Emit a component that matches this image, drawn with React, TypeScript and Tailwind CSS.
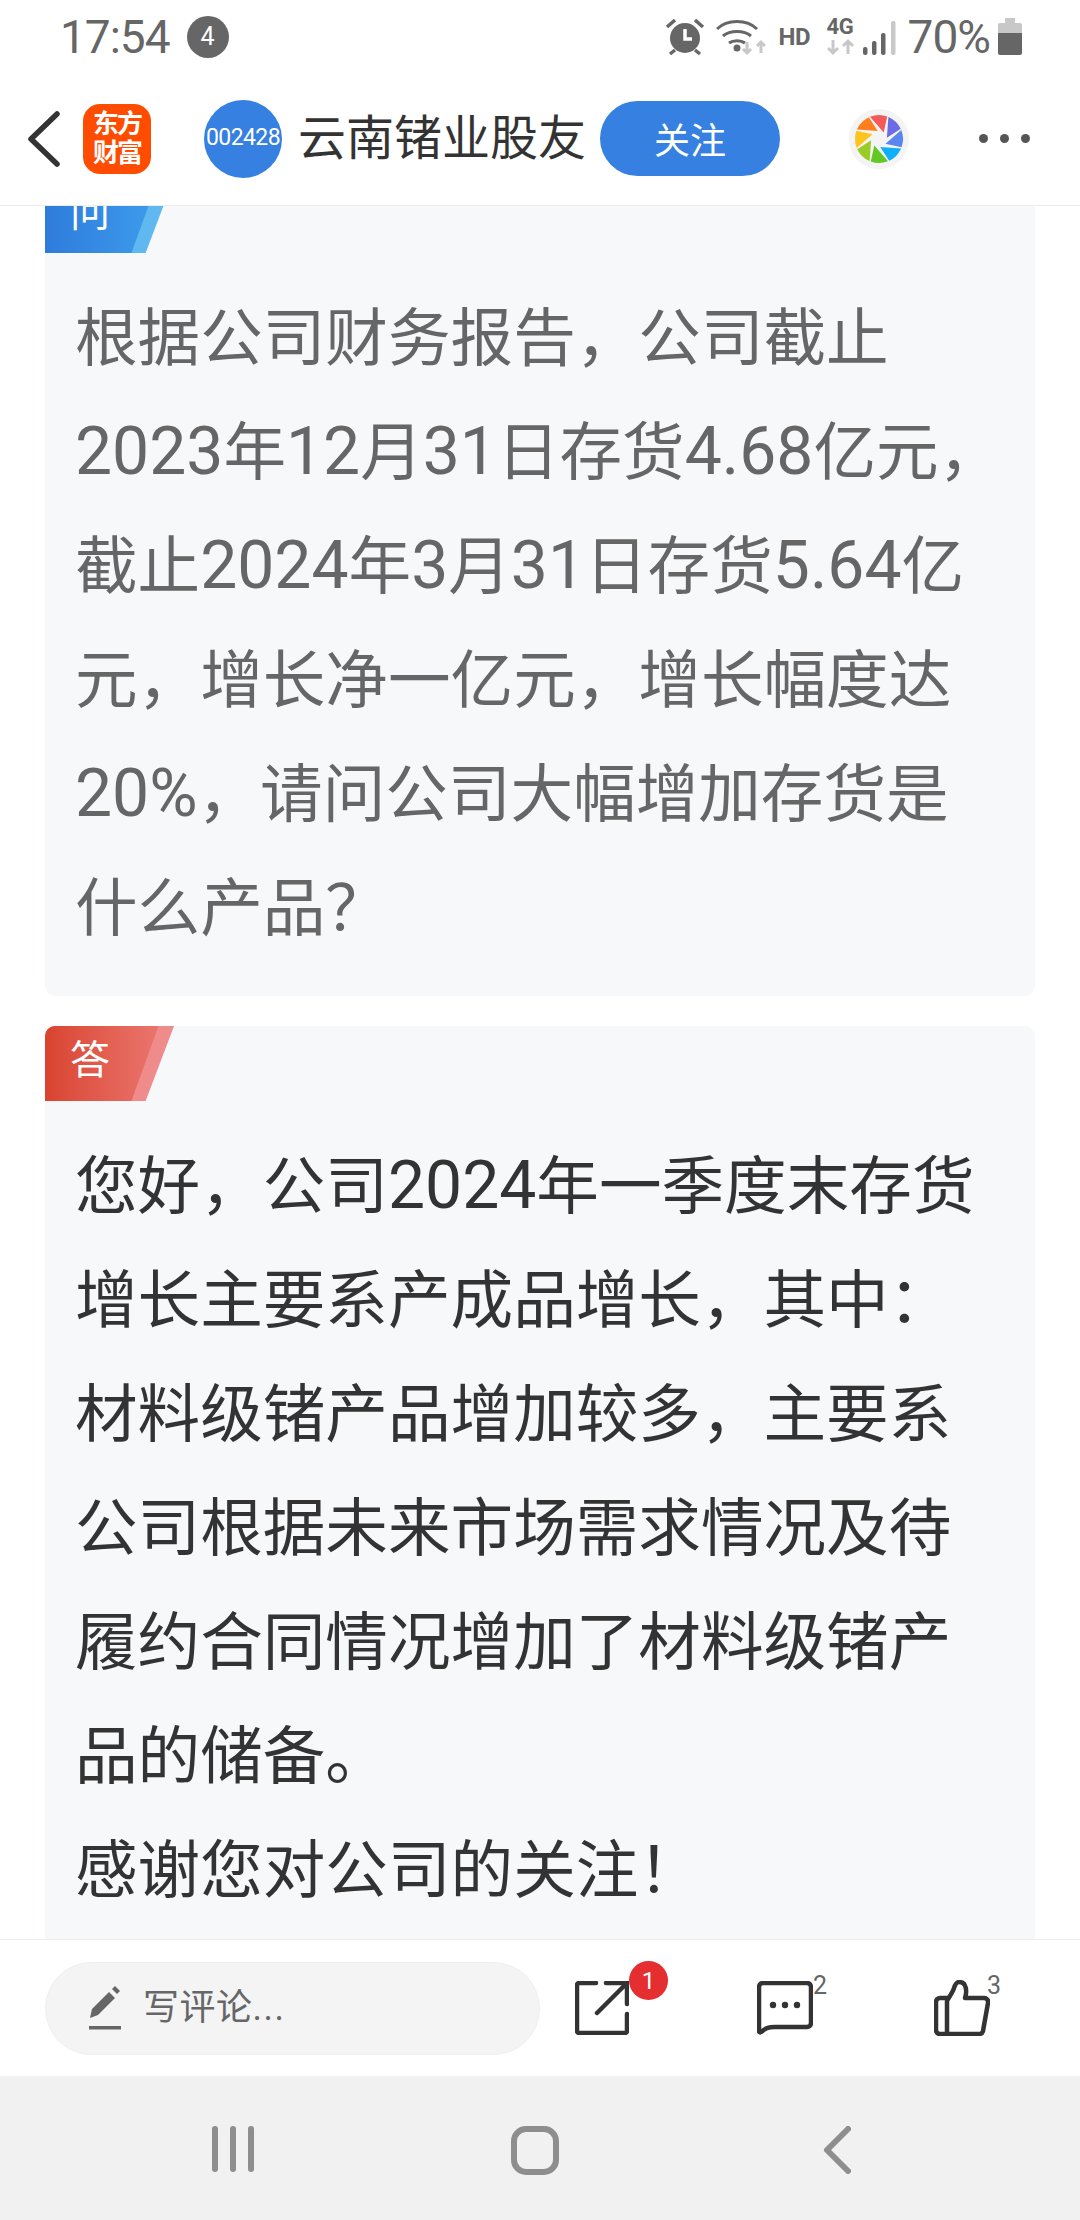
import React from 'react';

const question = [
  '根据公司财务报告，公司截止',
  '2023年12月31日存货4.68亿元，',
  '截止2024年3月31日存货5.64亿',
  '元，增长净一亿元，增长幅度达',
  '20%，请问公司大幅增加存货是',
  '什么产品？',
];

const answer = [
  '您好，公司2024年一季度末存货',
  '增长主要系产成品增长，其中：',
  '材料级锗产品增加较多，主要系',
  '公司根据未来市场需求情况及待',
  '履约合同情况增加了材料级锗产',
  '品的储备。',
  '感谢您对公司的关注！',
];

const blades = ['#f55a5a', '#6b6be8', '#5b86f0', '#0fb0f8', '#62c924', '#9acb27', '#fdc41e', '#ff7f1e'];

function StatusIcons() {
  return (
    <div className="flex items-center">
      {/* alarm */}
      <svg width="40" height="38" viewBox="0 0 40 38" className="mr-[11px]">
        <circle cx="20" cy="20" r="15" fill="#666" />
        <path d="M20 11v10h7" stroke="#fff" strokeWidth="3.5" fill="none" />
        <path d="M2 9l8-7M38 9l-8-7" stroke="#666" strokeWidth="3.5" />
        <path d="M5 36l5-4M35 36l-5-4" stroke="#666" strokeWidth="3.5" />
      </svg>
      {/* wifi */}
      <svg width="50" height="38" viewBox="0 0 50 38" className="mr-[13px]">
        <path d="M1 11C11 1 31 1 41 11M7 18c7-6 21-6 28 0M13 25c4-3 12-3 16 0" stroke="#666" strokeWidth="3" fill="none" />
        <circle cx="21" cy="30" r="3.5" fill="#666" />
        <path d="M31 24v11m-4-4l4 4 4-4M45 35V24m-4 4l4-4 4 4" stroke="#c8c8c8" strokeWidth="3" fill="none" />
      </svg>
      <span className="w-[48px] text-[24px] font-bold text-[#666] leading-none tracking-[-0.5px]">HD</span>
      <div className="relative w-[36px] h-[38px]">
        <span className="absolute left-0 top-[-2px] text-[22px] font-bold text-[#666] leading-none tracking-[-0.5px]">4G</span>
        <svg width="28" height="18" viewBox="0 0 28 18" className="absolute left-0 top-[20px]">
          <path d="M6 2v13m-5-5l5 5 5-5M21 16V3m-5 5l5-5 5 5" stroke="#c8c8c8" strokeWidth="3" fill="none" />
        </svg>
      </div>
      {/* signal */}
      <svg width="34" height="36" viewBox="0 0 34 36" className="mr-[11px]">
        <rect x="0" y="28" width="4.5" height="8" rx="2" fill="#666" />
        <rect x="9" y="22" width="4.5" height="14" rx="2" fill="#666" />
        <rect x="18" y="14" width="4.5" height="22" rx="2" fill="#666" />
        <rect x="28" y="2" width="4.5" height="34" rx="2" fill="#c8c8c8" />
      </svg>
      <span className="text-[46px] text-[#666] leading-none tracking-[-1px]">70%</span>
      {/* battery */}
      <svg width="24" height="37" viewBox="0 0 24 37" className="ml-[8px]">
        <path d="M7 0h10v5h5a2 2 0 012 2v8H0V7a2 2 0 012-2h5z" fill="#c8c8c8" />
        <path d="M0 15h24v20a2 2 0 01-2 2H2a2 2 0 01-2-2z" fill="#666" />
      </svg>
    </div>
  );
}

function Aperture() {
  const pt = (r: number, deg: number) => {
    const a = ((deg - 90) * Math.PI) / 180;
    return `${(30 + r * Math.cos(a)).toFixed(2)} ${(30 + r * Math.sin(a)).toFixed(2)}`;
  };
  return (
    <svg width="60" height="60" viewBox="0 0 60 60">
      <circle cx="30" cy="30" r="30" fill="#f4f4f4" />
      {blades.map((c, i) => {
        const a = -22 + i * 45;
        return <path key={c} d={`M${pt(24, a)}A24 24 0 0 1 ${pt(24, a + 42)}L${pt(8, a + 58)}Z`} fill={c} />;
      })}
    </svg>
  );
}

function Header() {
  return (
    <header className="h-[134px] shrink-0 flex items-center border-b border-[#ececec] bg-white relative z-10">
      <svg width="34" height="56" viewBox="0 0 34 56" className="ml-[26px]">
        <path d="M31 3L5 28l26 25" stroke="#333" strokeWidth="5.5" fill="none" strokeLinecap="round" strokeLinejoin="round" />
      </svg>
      <div className="ml-[23px] w-[68px] h-[70px] rounded-[17px] bg-[#ff4c00] text-white font-bold text-[26px] leading-[29px] text-center tracking-[-2px] flex flex-col justify-center">
        <span>东方</span>
        <span>财富</span>
      </div>
      <div className="ml-[53px] w-[78px] h-[78px] rounded-full bg-[#3580e0] text-white text-[23px] flex items-center justify-center tracking-[-0.6px]">
        002428
      </div>
      <span className="ml-[16px] text-[48px] text-[#333] leading-none">云南锗业股友</span>
      <button className="ml-[14px] w-[180px] h-[75px] pt-[6px] rounded-full bg-[#3580e0] text-white text-[36px] leading-none">
        关注
      </button>
      <div className="ml-[69px]">
        <Aperture />
      </div>
      <div className="ml-[70px] flex gap-[12px]">
        <span className="w-[9px] h-[9px] rounded-full bg-[#555]" />
        <span className="w-[9px] h-[9px] rounded-full bg-[#555]" />
        <span className="w-[9px] h-[9px] rounded-full bg-[#555]" />
      </div>
    </header>
  );
}

function Tag({ label, red }: { label: string; red?: boolean }) {
  return (
    <div className="relative w-[129px] h-[75px] rounded-tl-[10px] overflow-hidden">
      <div className={`absolute inset-0 [clip-path:polygon(0_0,100%_0,78%_100%,0_100%)] ${red ? 'bg-[#f08b8c]' : 'bg-[#5fb8ef]'}`} />
      <div
        className={`absolute inset-0 [clip-path:polygon(0_0,88%_0,67%_100%,0_100%)] bg-linear-to-r ${
          red ? 'from-[#d9432f] to-[#ec7a74]' : 'from-[#2f7bdc] to-[#40a2ee]'
        }`}
      />
      <span className="absolute left-[25px] top-[15px] text-[40px] leading-none text-white">{label}</span>
    </div>
  );
}

// digits sit a touch bigger than the chinese text in the original
function Line({ text }: { text: string }) {
  return (
    <div>
      {text.split(/([0-9.%]+)/).map((part, i) =>
        i % 2 === 1 ? (
          <span key={i} className="text-[66px] leading-none">
            {part}
          </span>
        ) : (
          part
        ),
      )}
    </div>
  );
}

function Card({ tag, lines, red, className }: { tag: string; lines: string[]; red?: boolean; className: string }) {
  return (
    <section className={`mx-[45px] rounded-[10px] bg-[#f7f8fa] ${className}`}>
      <Tag label={tag} red={red} />
      <div className={`pl-[30px] pt-[29px] text-[62.6px] leading-[114px] whitespace-nowrap ${red ? 'text-[#333]' : 'text-[#666]'}`}>
        {lines.map((l) => (
          <Line key={l} text={l} />
        ))}
      </div>
    </section>
  );
}

function Footer() {
  return (
    <footer className="h-[137px] shrink-0 flex items-center bg-white border-t border-[#ececec] relative z-10">
      <div className="ml-[45px] w-[495px] h-[93px] rounded-full bg-[#f4f4f4] border border-[#efefef] flex items-center">
        <svg width="32" height="44" viewBox="0 0 32 44" className="ml-[43px]">
          <path d="M1 32l2-9L20 6l6 6L9 29z" fill="#666" />
          <path d="M23 3l3-3 5 5-3 3z" fill="#666" />
          <rect x="0" y="40" width="32" height="3.5" fill="#666" />
        </svg>
        <span className="ml-[22px] text-[36px] text-[#666] leading-none tracking-[0.5px]">
          写评论<span className="tracking-[1.5px]">...</span>
        </span>
      </div>

      {/* share */}
      <div className="relative ml-[35px] w-[54px] h-[54px]">
        <svg width="54" height="54" viewBox="0 0 54 54">
          <path
            d="M21 2H4a2 2 0 00-2 2v46a2 2 0 002 2h46a2 2 0 002-2V33"
            stroke="#333"
            strokeWidth="4.5"
            fill="none"
            strokeLinecap="round"
          />
          <path d="M31 2h21v21M52 2L22 32" stroke="#333" strokeWidth="4.5" fill="none" strokeLinecap="round" />
        </svg>
        <span className="absolute left-[54px] top-[-20px] w-[39px] h-[39px] rounded-full bg-[#e52e30] text-white text-[24px] flex items-center justify-center">
          1
        </span>
      </div>

      {/* comment */}
      <div className="relative ml-[128px] w-[56px] h-[54px]">
        <svg width="56" height="54" viewBox="0 0 56 54">
          <path
            d="M2 6a4 4 0 014-4h44a4 4 0 014 4v36a4 4 0 01-4 4H18c-8 0-10 2-14 5-1 1-2 0-2-1z"
            stroke="#333"
            strokeWidth="4.5"
            fill="none"
            strokeLinejoin="round"
          />
          <circle cx="16" cy="24" r="3.2" fill="#333" />
          <circle cx="28" cy="24" r="3.2" fill="#333" />
          <circle cx="40" cy="24" r="3.2" fill="#333" />
        </svg>
        <span className="absolute left-[56px] top-[-8px] text-[25px] leading-none text-[#666]">2</span>
      </div>

      {/* like */}
      <div className="relative ml-[121px] w-[56px] h-[56px]">
        <svg width="56" height="56" viewBox="0 0 56 56">
          <path
            d="M15 18h-9a4 4 0 00-4 4v28a4 4 0 004 4h39a4 4 0 004-3l5-28a4 4 0 00-4-5H31c2-6 2-16-6-16-3 0-4 3-5 6-1 4-5 9-7 13v33"
            stroke="#333"
            strokeWidth="4.5"
            fill="none"
            strokeLinejoin="round"
          />
        </svg>
        <span className="absolute left-[53px] top-[-7px] text-[25px] leading-none text-[#666]">3</span>
      </div>
    </footer>
  );
}

function NavBar() {
  return (
    <nav className="h-[144px] shrink-0 bg-[#f1f1f1] relative">
      <div className="h-full flex items-start pt-[50px]">
        <div className="ml-[212px] flex gap-[12px]">
          <span className="w-[6px] h-[46px] rounded-full bg-[#8e8e8e]" />
          <span className="w-[6px] h-[46px] rounded-full bg-[#8e8e8e]" />
          <span className="w-[6px] h-[46px] rounded-full bg-[#8e8e8e]" />
        </div>
        <div className="ml-[257px] w-[48px] h-[49px] rounded-[15px] border-[6px] border-[#8e8e8e]" />
        <svg width="28" height="48" viewBox="0 0 28 48" className="ml-[264px]">
          <path d="M25 3L4 24l21 21" stroke="#8e8e8e" strokeWidth="6" fill="none" strokeLinecap="round" strokeLinejoin="round" />
        </svg>
      </div>
    </nav>
  );
}

export default function App() {
  return (
    <div
      lang="zh-CN"
      className="w-[1080px] h-[2220px] flex flex-col overflow-hidden bg-white font-['Roboto','Noto_Sans_CJK_SC',sans-serif]"
    >
      <div className="h-[72px] shrink-0 flex items-center pl-[60px] pt-[1px] pr-[58px] justify-between">
        <div className="flex items-center">
          <span className="text-[46px] text-[#666] leading-none tracking-[-1px]">17:54</span>
          <span className="ml-[17px] w-[42px] h-[42px] rounded-full bg-[#666] text-white text-[25px] flex items-center justify-center">
            4
          </span>
        </div>
        <StatusIcons />
      </div>
      <Header />
      <main className="flex-1 min-h-0 overflow-hidden">
        <Card tag="问" lines={question} className="-mt-[28px] pb-[30px]" />
        <Card tag="答" lines={answer} red className="mt-[30px] pb-[40px]" />
      </main>
      <Footer />
      <NavBar />
    </div>
  );
}
